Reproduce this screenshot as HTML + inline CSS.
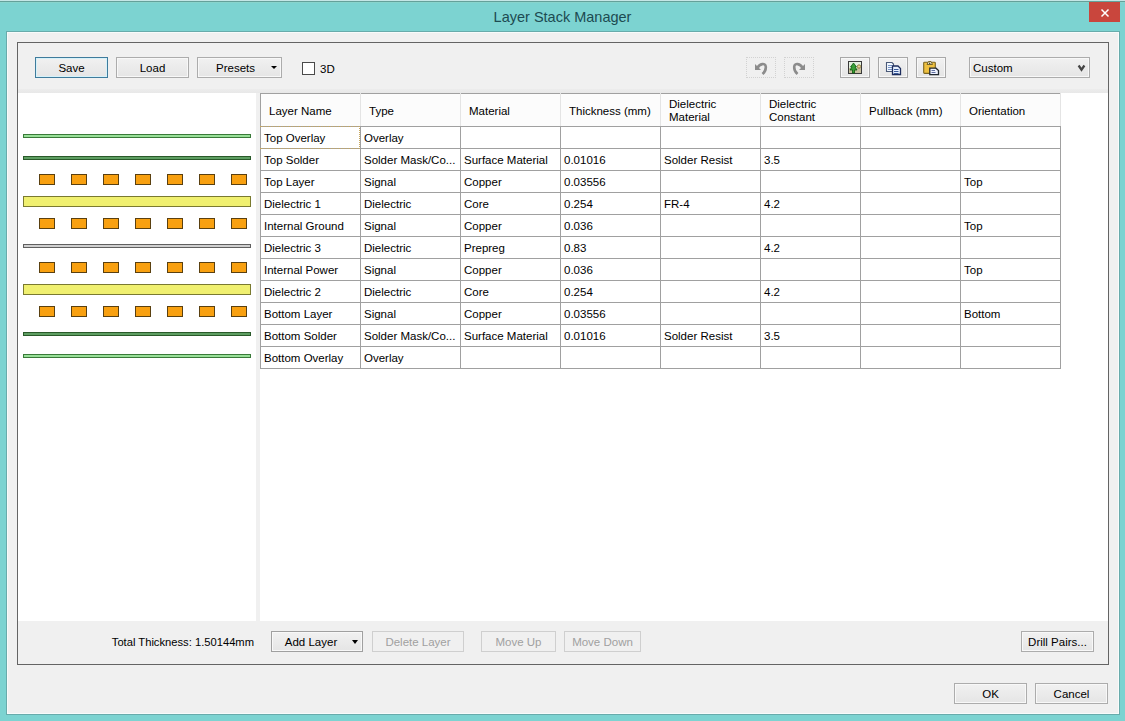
<!DOCTYPE html>
<html><head><meta charset="utf-8">
<style>
*{box-sizing:border-box;margin:0;padding:0}
html,body{width:1125px;height:721px;overflow:hidden}
body{position:relative;background:#7cd3d1;font-family:"Liberation Sans",sans-serif;font-size:11px;color:#000}
.a{position:absolute}
#topline{left:0;top:0;width:1125px;height:3px;background:linear-gradient(#c4e6e6 0,#c4e6e6 1px,#64a09a 1px,#64a09a 2px,#88d4cc 2px)}
#title{left:0;top:8px;width:1125px;text-align:center;font-size:14.5px;color:#1d4b52;line-height:18px}
#close{left:1089px;top:2px;width:31px;height:20px;background:#c9463d}
#content{left:7px;top:32px;width:1112px;height:682px;background:#f0f0f0;border:1px solid #f8fbfb;box-shadow:0 0 0 1px #68abab}
#frame{left:17px;top:42px;width:1092px;height:623px;border:1px solid #646464;background:#f0f0f0}
.btn{position:absolute;height:21px;border:1px solid #acacac;background:linear-gradient(#f1f1f1,#e5e5e5);box-shadow:inset 0 0 0 1px #f8f8f8;text-align:center;line-height:20px;font-size:11.5px;color:#000}
.btn.dis{color:#a0a0a0;border-color:#cfcfcf;background:#f0f0f0;box-shadow:none}
#leftpanel{left:18px;top:93px;width:238px;height:528px;background:#fff}
#tablearea{left:260px;top:93px;width:848px;height:528px;background:#fff}
table{position:absolute;left:260px;top:93px;border-collapse:collapse;table-layout:fixed}
td{width:100px;height:22px;border:1px solid #a0a0a0;padding:0 0 0 3px;font-size:11.5px;white-space:nowrap;overflow:hidden;vertical-align:middle}
th{width:100px;height:33px;border:1px solid #a0a0a0;border-top-color:#a0a0a0;padding:2px 0 0 8px;font-weight:normal;text-align:left;font-size:11.5px;line-height:13px;background:#fcfcfc;vertical-align:middle}
th{border-left-color:#e4e4e4;border-right-color:#e4e4e4}
th:first-child{border-left-color:#a0a0a0}
.ln{position:absolute;left:23px;width:228px;height:4px;border:1px solid}
.ov{background:#98e098;border-color:#3a7a3a}
.sm{background:#5e9e62;border-color:#2a5a2a}
.pp{background:#d0d0d0;border-color:#606060}
.die{position:absolute;left:23px;width:228px;height:11px;background:#f0f070;border:1px solid #7a7a30}
.tri{position:absolute;width:0;height:0;border-left:3px solid transparent;border-right:3px solid transparent;border-top:3px solid #000}
.pad{position:absolute;width:16px;height:11px;background:#f8a010;border:1px solid #5a4010}
</style></head><body>
<div class="a" id="topline"></div>
<div class="a" id="title">Layer Stack Manager</div>
<div class="a" id="close"></div>
<svg class="a" style="left:1100px;top:8px" width="10" height="10" viewBox="0 0 10 10"><path d="M1.5 1.5 L8.5 8.5 M8.5 1.5 L1.5 8.5" stroke="#fff" stroke-width="1.5"/></svg>
<div class="a" id="content"></div>
<div class="a" id="frame"></div>

<div class="btn" style="left:35px;top:57px;width:73px;border-color:#3f7b9c;box-shadow:inset 0 0 0 1px #d6f2fa">Save</div>
<div class="btn" style="left:116px;top:57px;width:73px">Load</div>
<div class="btn" style="left:197px;top:57px;width:85px;padding-right:8px">Presets</div>
<div class="tri" style="left:271px;top:66px"></div>
<div class="a" style="left:302px;top:62px;width:13px;height:13px;border:1px solid #4a4a4a;background:#fff"></div>
<div class="a" style="left:320px;top:62px;font-size:11.5px;line-height:15px">3D</div>

<div class="btn dis" style="left:746px;top:57px;width:30px;border:1px dotted #d2d2d2"></div>
<div class="btn dis" style="left:784px;top:57px;width:30px;border:1px dotted #d2d2d2"></div>
<svg class="a" style="left:750px;top:58px" width="22" height="20" viewBox="0 0 22 20">
  <path d="M5 6 L5 12 L11 12 Z" fill="#8c8c8c"/>
  <path d="M7.5 10 C9.5 5.5 15.5 4.5 15.8 8.8 C16 11.8 14.2 14.5 12.5 16" fill="none" stroke="#8c8c8c" stroke-width="2.6"/>
</svg>
<svg class="a" style="left:788px;top:58px" width="22" height="20" viewBox="0 0 22 20">
  <g transform="translate(22 0) scale(-1 1)">
  <path d="M5 6 L5 12 L11 12 Z" fill="#8c8c8c"/>
  <path d="M7.5 10 C9.5 5.5 15.5 4.5 15.8 8.8 C16 11.8 14.2 14.5 12.5 16" fill="none" stroke="#8c8c8c" stroke-width="2.6"/>
  </g>
</svg>
<div class="btn" style="left:840px;top:57px;width:30px;border-color:#a8a8a8"></div>
<div class="btn" style="left:878px;top:57px;width:30px;border-color:#a8a8a8"></div>
<div class="btn" style="left:916px;top:57px;width:30px;border-color:#a8a8a8"></div>
<svg class="a" style="left:845px;top:58px" width="22" height="20" viewBox="0 0 22 20">
  <rect x="3.5" y="3.5" width="13" height="12" fill="#e4f0e0" stroke="#3a3a3a"/>
  <rect x="4" y="10" width="12" height="5" fill="#c8c0a0"/>
  <circle cx="14" cy="8.5" r="1.7" fill="#e8d890" stroke="#806830" stroke-width="0.8"/>
  <path d="M8.5 5 L5.5 9 L7 9 L5 12 L7.5 12 L7.5 15 L9.5 15 L9.5 12 L12 12 L10 9 L11.5 9 Z" fill="#38a038" stroke="#0a5a0a" stroke-width="0.8"/>
</svg>
<svg class="a" style="left:882px;top:58px" width="22" height="20" viewBox="0 0 22 20">
  <path d="M4.5 4.5 H10 L11.5 6 V13.5 H4.5 Z" fill="#f2f8ff" stroke="#4a5a78" stroke-width="1.1"/>
  <path d="M6 7.5h4M6 9.5h4M6 11.5h4" stroke="#6a88c0" stroke-width="0.9"/>
  <path d="M10.5 8 H16 L18.5 10.5 V16.5 H10.5 Z" fill="#e6f0ff" stroke="#1c2c5c" stroke-width="1.3"/>
  <path d="M12 11.5h4.5M12 13.5h4.5M12 15.5h4.5" stroke="#3a5a9a" stroke-width="1"/>
</svg>
<svg class="a" style="left:920px;top:58px" width="22" height="20" viewBox="0 0 22 20">
  <rect x="3.7" y="4.2" width="11.6" height="11.2" rx="0.8" fill="#eec040" stroke="#7a6420" stroke-width="1.1"/>
  <path d="M7 6.5 L8.5 3.5 H11 L12.5 6.5 Z" fill="#f2eac8" stroke="#6a5a20" stroke-width="0.9"/>
  <circle cx="9.7" cy="5.2" r="0.8" fill="#303030"/>
  <path d="M9.8 10.2 H16 L18.5 12.5 V16.6 H9.8 Z" fill="#eef2ff" stroke="#202830" stroke-width="1.3"/>
  <path d="M11.5 12.5h3.5M11.5 14.5h4" stroke="#6070a0" stroke-width="1"/>
</svg>
<div class="btn" style="left:969px;top:57px;width:121px;text-align:left;padding-left:3px;font-size:11.5px">Custom</div>
<svg class="a" style="left:1076px;top:63px" width="11" height="9" viewBox="0 0 11 9">
  <path d="M2.6 2.5 L5.5 6.7 L8.4 2.5" fill="none" stroke="#454545" stroke-width="2.2"/>
</svg>

<div class="a" style="left:100px;top:635px;width:154px;text-align:right;font-size:11.2px;line-height:14px">Total Thickness: 1.50144mm</div>
<div class="btn" style="left:271px;top:631px;line-height:21px;width:92px;border-color:#a0a0a0;padding-right:12px">Add Layer</div>
<div class="tri" style="left:352px;top:640px;border-left-width:3px;border-right-width:3px;border-top-width:4px"></div>
<div class="btn dis" style="left:372px;top:631px;line-height:21px;width:92px">Delete Layer</div>
<div class="btn dis" style="left:481px;top:631px;line-height:21px;width:75px">Move Up</div>
<div class="btn dis" style="left:564px;top:631px;line-height:21px;width:77px">Move Down</div>
<div class="btn" style="left:1021px;top:631px;line-height:21px;width:73px">Drill Pairs...</div>
<div class="btn" style="left:954px;top:683px;width:73px">OK</div>
<div class="btn" style="left:1035px;top:683px;width:73px">Cancel</div>

<div class="a" style="left:18px;top:89px;width:1090px;height:4px;background:linear-gradient(#ececec,#e8e8e8)"></div>
<div class="a" id="leftpanel"></div>
<div class="a" id="tablearea"></div>
<div class="ln ov" style="top:134px"></div>
<div class="ln sm" style="top:156px"></div>
<div class="pad" style="left:39px;top:174px"></div>
<div class="pad" style="left:71px;top:174px"></div>
<div class="pad" style="left:103px;top:174px"></div>
<div class="pad" style="left:135px;top:174px"></div>
<div class="pad" style="left:167px;top:174px"></div>
<div class="pad" style="left:199px;top:174px"></div>
<div class="pad" style="left:231px;top:174px"></div>
<div class="die" style="top:196px"></div>
<div class="pad" style="left:39px;top:218px"></div>
<div class="pad" style="left:71px;top:218px"></div>
<div class="pad" style="left:103px;top:218px"></div>
<div class="pad" style="left:135px;top:218px"></div>
<div class="pad" style="left:167px;top:218px"></div>
<div class="pad" style="left:199px;top:218px"></div>
<div class="pad" style="left:231px;top:218px"></div>
<div class="ln pp" style="top:244px"></div>
<div class="pad" style="left:39px;top:262px"></div>
<div class="pad" style="left:71px;top:262px"></div>
<div class="pad" style="left:103px;top:262px"></div>
<div class="pad" style="left:135px;top:262px"></div>
<div class="pad" style="left:167px;top:262px"></div>
<div class="pad" style="left:199px;top:262px"></div>
<div class="pad" style="left:231px;top:262px"></div>
<div class="die" style="top:284px"></div>
<div class="pad" style="left:39px;top:306px"></div>
<div class="pad" style="left:71px;top:306px"></div>
<div class="pad" style="left:103px;top:306px"></div>
<div class="pad" style="left:135px;top:306px"></div>
<div class="pad" style="left:167px;top:306px"></div>
<div class="pad" style="left:199px;top:306px"></div>
<div class="pad" style="left:231px;top:306px"></div>
<div class="ln sm" style="top:332px"></div>
<div class="ln ov" style="top:354px"></div>

<table>
<tr><th>Layer Name</th><th>Type</th><th>Material</th><th>Thickness (mm)</th><th>Dielectric<br>Material</th><th>Dielectric<br>Constant</th><th>Pullback (mm)</th><th>Orientation</th></tr>
<tr><td>Top Overlay</td><td>Overlay</td><td></td><td></td><td></td><td></td><td></td><td></td></tr>
<tr><td>Top Solder</td><td>Solder Mask/Co...</td><td>Surface Material</td><td>0.01016</td><td>Solder Resist</td><td>3.5</td><td></td><td></td></tr>
<tr><td>Top Layer</td><td>Signal</td><td>Copper</td><td>0.03556</td><td></td><td></td><td></td><td>Top</td></tr>
<tr><td>Dielectric 1</td><td>Dielectric</td><td>Core</td><td>0.254</td><td>FR-4</td><td>4.2</td><td></td><td></td></tr>
<tr><td>Internal Ground</td><td>Signal</td><td>Copper</td><td>0.036</td><td></td><td></td><td></td><td>Top</td></tr>
<tr><td>Dielectric 3</td><td>Dielectric</td><td>Prepreg</td><td>0.83</td><td></td><td>4.2</td><td></td><td></td></tr>
<tr><td>Internal Power</td><td>Signal</td><td>Copper</td><td>0.036</td><td></td><td></td><td></td><td>Top</td></tr>
<tr><td>Dielectric 2</td><td>Dielectric</td><td>Core</td><td>0.254</td><td></td><td>4.2</td><td></td><td></td></tr>
<tr><td>Bottom Layer</td><td>Signal</td><td>Copper</td><td>0.03556</td><td></td><td></td><td></td><td>Bottom</td></tr>
<tr><td>Bottom Solder</td><td>Solder Mask/Co...</td><td>Surface Material</td><td>0.01016</td><td>Solder Resist</td><td>3.5</td><td></td><td></td></tr>
<tr><td>Bottom Overlay</td><td>Overlay</td><td></td><td></td><td></td><td></td><td></td><td></td></tr>
</table>
<div class="a" style="left:260px;top:126px;width:100px;height:23px;border:1px dotted #c8a860;border-left:none"></div>

</body></html>
